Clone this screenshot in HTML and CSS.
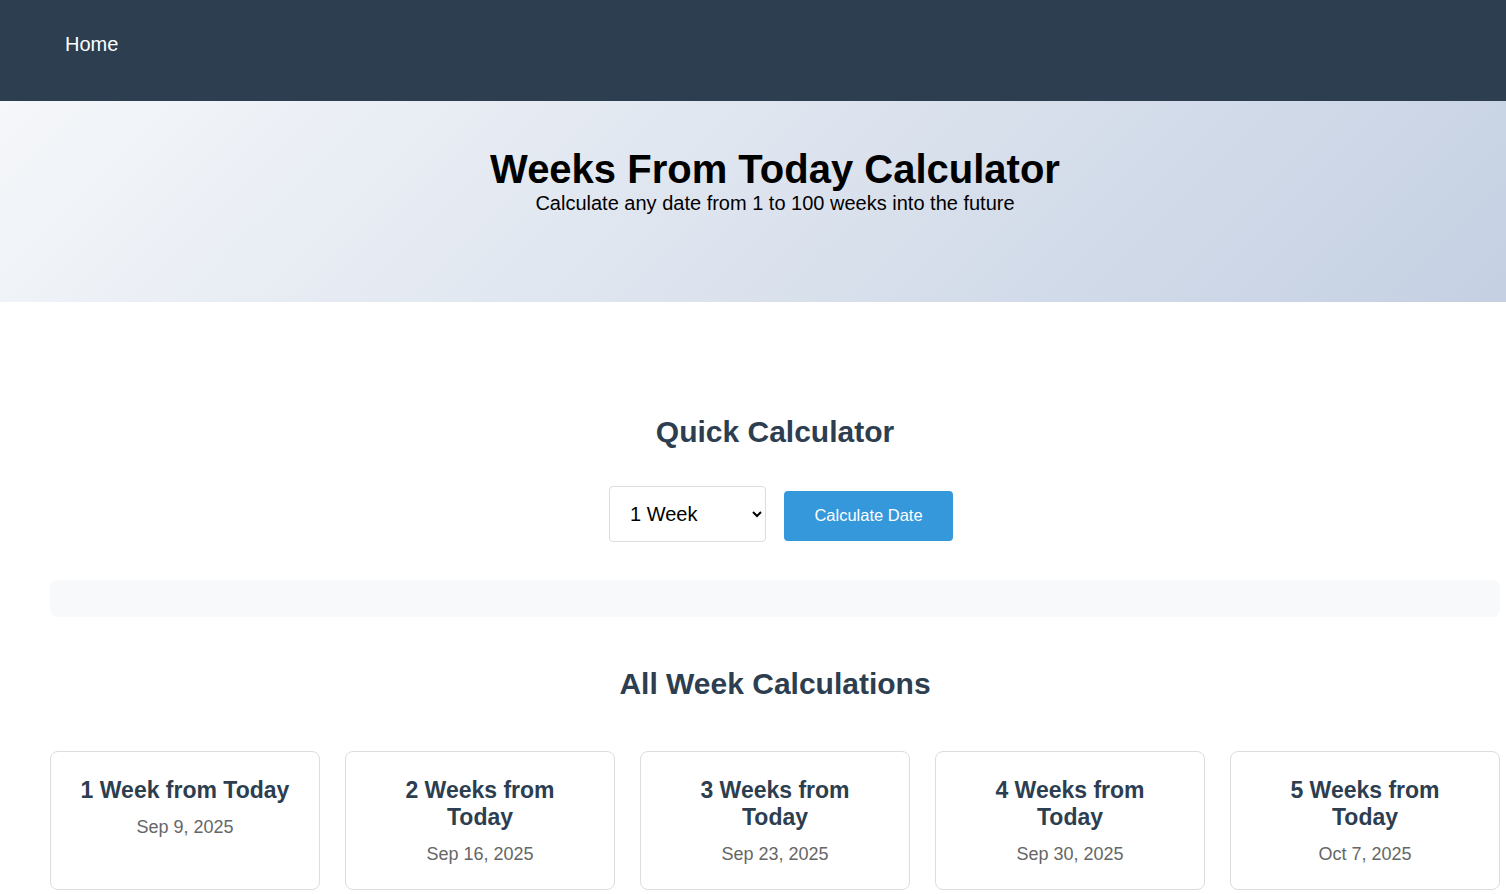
FILE: index.html
```html
<!DOCTYPE html>
<html lang="en">
<head>
<meta charset="utf-8">
<title>Weeks From Today Calculator</title>
<link rel="stylesheet" href="styles.css">
</head>
<body>
<div class="page">
  <nav class="nav">
    <a class="nav-link" href="#">Home</a>
  </nav>
  <header class="hero">
    <h1 class="hero-title">Weeks From Today Calculator</h1>
    <p class="hero-sub">Calculate any date from 1 to 100 weeks into the future</p>
  </header>
  <main class="main">
    <h2 class="section-title quick">Quick Calculator</h2>
    <div class="controls">
      <select class="week-select">
        <option>1 Week</option>
        <option>2 Weeks</option>
        <option>3 Weeks</option>
      </select>
      <button class="calc-btn" type="button">Calculate Date</button>
    </div>
    <div class="result"></div>
    <h2 class="section-title all">All Week Calculations</h2>
    <div class="cards">
      <div class="card"><h3 class="card-title">1 Week from Today</h3><p class="card-date">Sep 9, 2025</p></div>
      <div class="card"><h3 class="card-title">2 Weeks from Today</h3><p class="card-date">Sep 16, 2025</p></div>
      <div class="card"><h3 class="card-title">3 Weeks from Today</h3><p class="card-date">Sep 23, 2025</p></div>
      <div class="card"><h3 class="card-title">4 Weeks from Today</h3><p class="card-date">Sep 30, 2025</p></div>
      <div class="card"><h3 class="card-title">5 Weeks from Today</h3><p class="card-date">Oct 7, 2025</p></div>
    </div>
  </main>
</div>
</body>
</html>
```

FILE: styles.css
```css
html {
  overflow-x: hidden;
}
body {
  margin: 0;
  font-family: "Liberation Sans", Arial, sans-serif;
  color: #000;
  background: #fff;
}
.page {
  width: 1550px;
}
.nav {
  box-sizing: border-box;
  height: 101px;
  background: #2c3e50;
  padding: 33px 0 0 65px;
}
.nav-link {
  color: #fff;
  text-decoration: none;
  font-size: 20px;
  line-height: 23px;
  display: inline-block;
}
.hero {
  box-sizing: border-box;
  height: 201px;
  padding-top: 45px;
  background: linear-gradient(135deg, #f5f7fa 0%, #c3cfe2 100%);
  text-align: center;
}
.hero-title {
  margin: 0;
  font-size: 40px;
  line-height: 46px;
  font-weight: bold;
}
.hero-sub {
  margin: 0;
  font-size: 20px;
  line-height: 22px;
}
.main {
  padding: 0 50px;
}
.section-title {
  margin: 0;
  text-align: center;
  color: #2c3e50;
  font-size: 30px;
  line-height: 34px;
  font-weight: bold;
}
.quick {
  padding-top: 113px;
}
.controls {
  display: flex;
  justify-content: center;
  align-items: center;
  gap: 18px;
  margin-top: 37px;
  padding-left: 12px;
}
.week-select {
  box-sizing: border-box;
  width: 157px;
  height: 56px;
  padding: 0 12px 0 16px;
  font-family: "Liberation Sans", Arial, sans-serif;
  font-size: 20px;
  color: #000;
  background: #fff;
  border: 1px solid #ddd;
  border-radius: 4px;
}
.calc-btn {
  box-sizing: border-box;
  width: 169px;
  height: 50px;
  margin-top: 4px;
  padding: 0 0 2px;
  border: none;
  border-radius: 4px;
  background: #3498db;
  color: #fff;
  font-family: "Liberation Sans", Arial, sans-serif;
  font-size: 16.5px;
}
.result {
  height: 37px;
  margin-top: 38px;
  background: #f8f9fa;
  border-radius: 8px;
}
.all {
  margin-top: 50px;
}
.cards {
  display: grid;
  grid-template-columns: repeat(5, 1fr);
  gap: 25px;
  margin-top: 50px;
}
.card {
  border: 1px solid #ddd;
  border-radius: 8px;
  padding: 25px 24px 24px;
  text-align: center;
  background: #fff;
}
.card-title {
  margin: 0 0 13px;
  color: #2c3e50;
  font-size: 23px;
  line-height: 27px;
  font-weight: bold;
}
.card-date {
  margin: 0;
  color: #666;
  font-size: 18px;
  line-height: 21px;
}
```
